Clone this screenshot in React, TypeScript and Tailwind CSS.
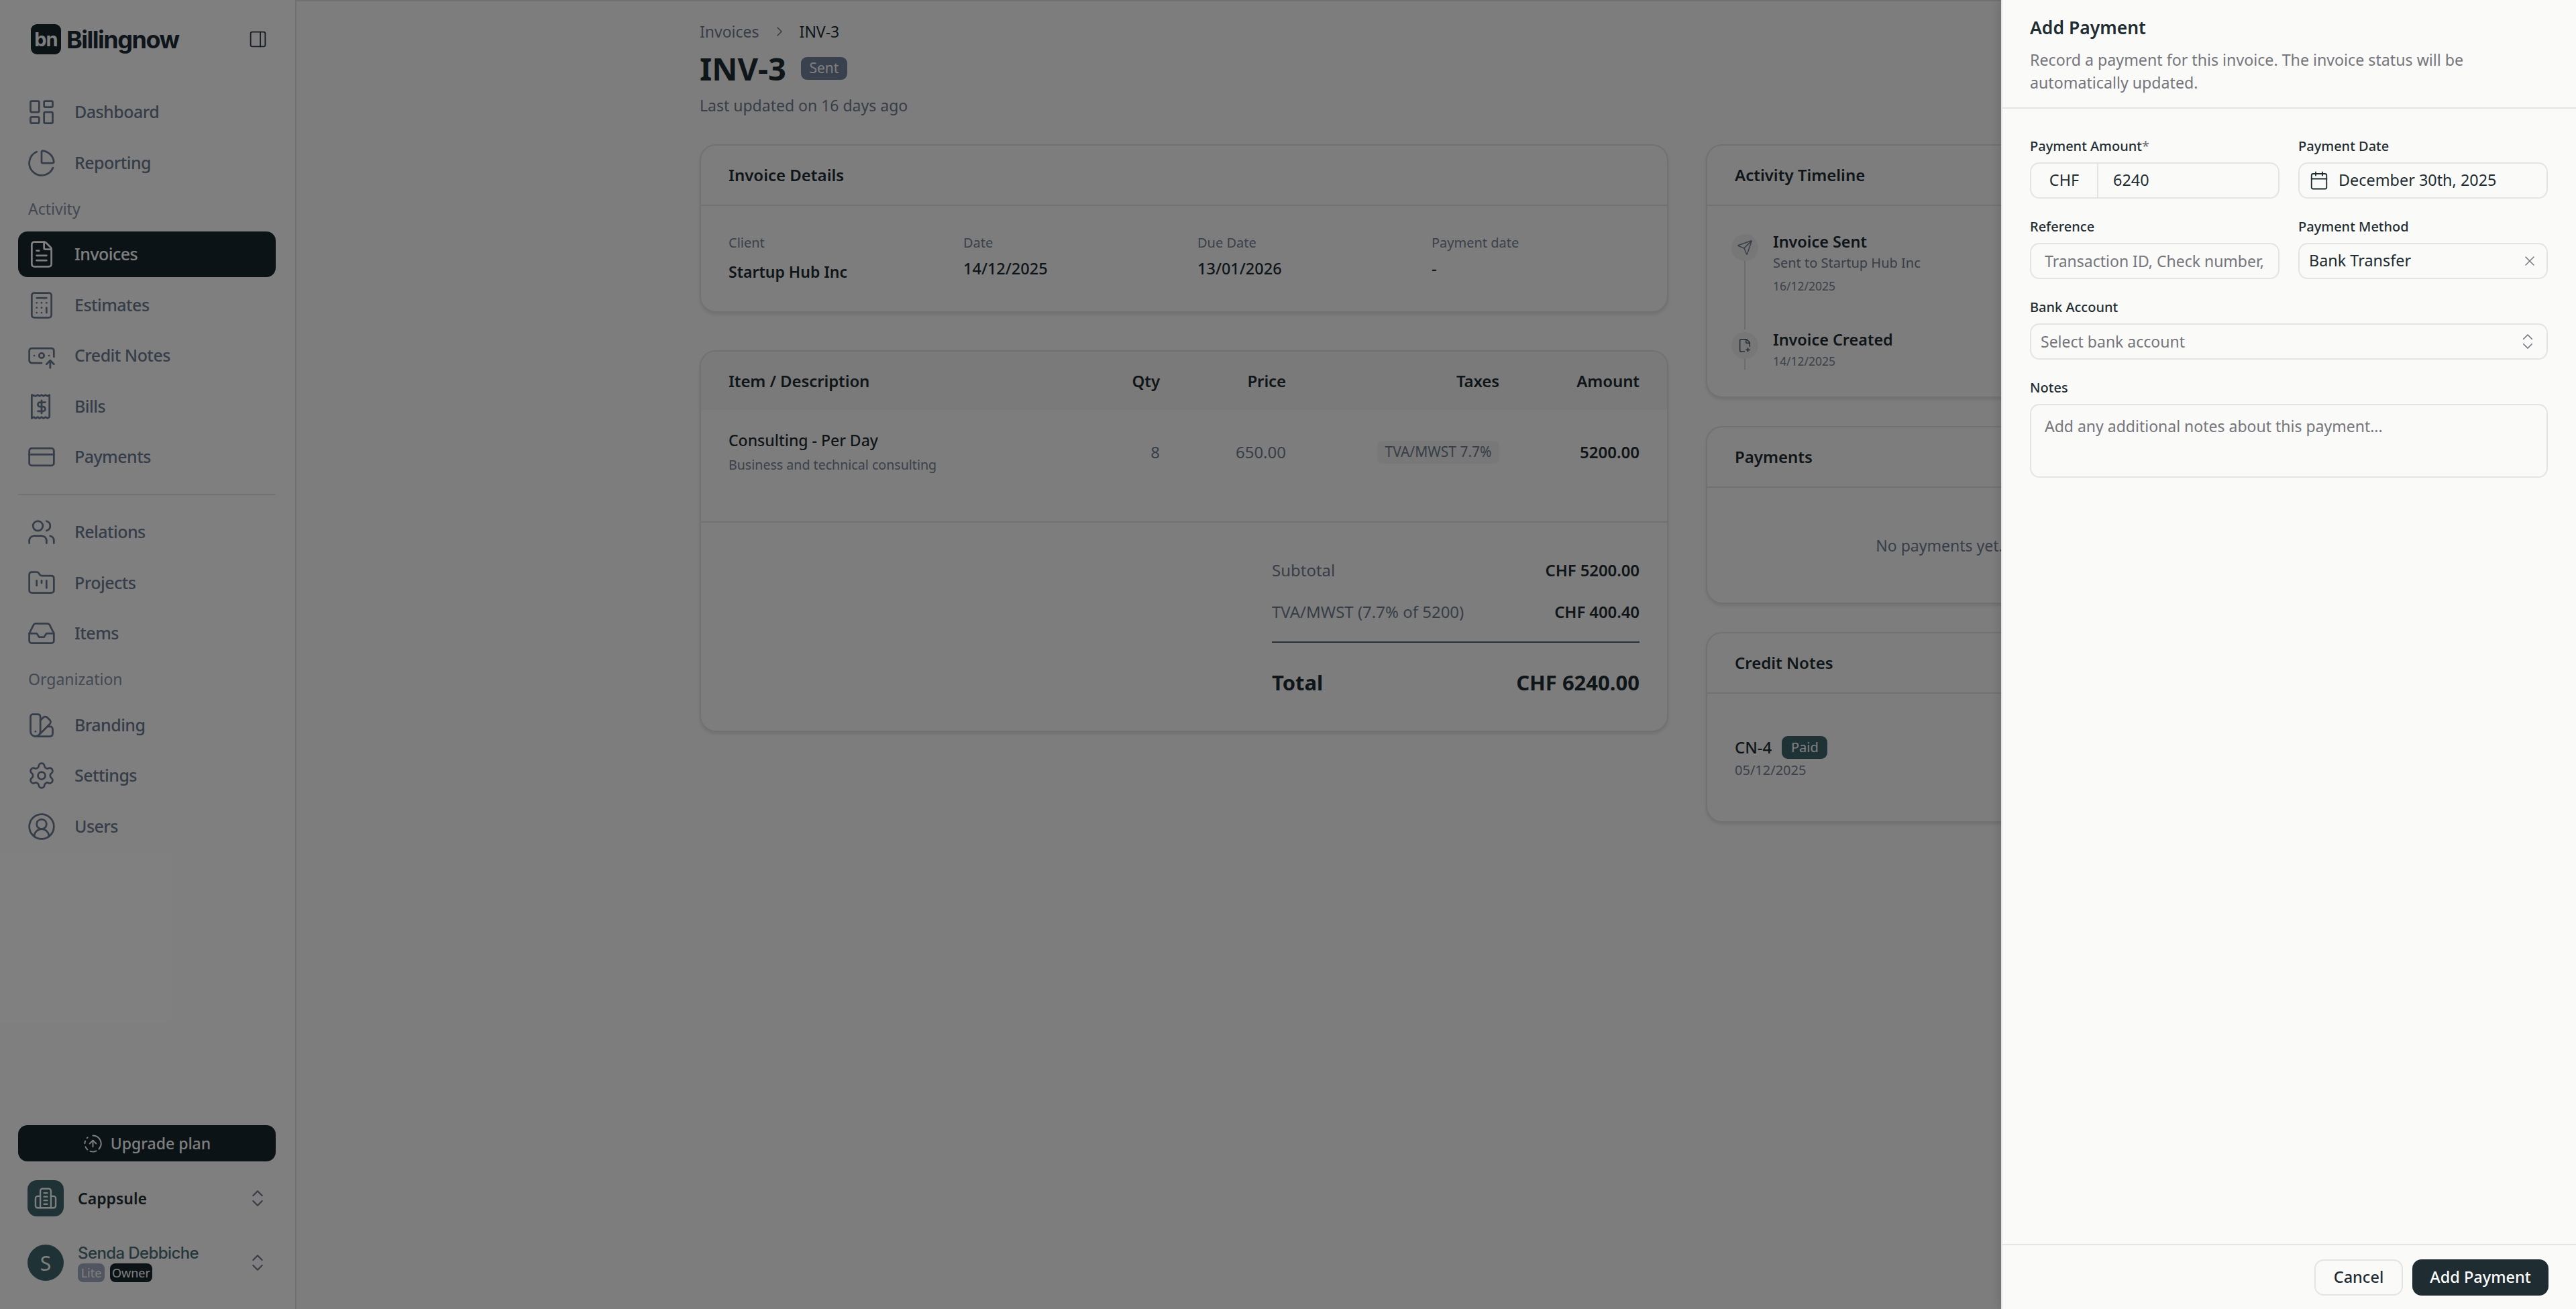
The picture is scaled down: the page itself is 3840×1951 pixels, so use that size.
import type { ReactNode } from 'react';
import {
  BanknoteArrowUp,
  Calculator,
  Calendar,
  ChartPie,
  ChevronRight,
  ChevronsUpDown,
  CircleFadingArrowUp,
  CircleUserRound,
  CreditCard,
  FilePlus2,
  FileText,
  FolderKanban,
  Inbox,
  LayoutDashboard,
  PanelRight,
  Send,
  Settings,
  SwatchBook,
  Users,
  X,
} from 'lucide-react';

function BillIcon({ size, strokeWidth }: { size: number; strokeWidth: number }) {
  return (
    <svg width={size} height={size} viewBox="0 0 24 24" fill="none" stroke="currentColor" strokeWidth={strokeWidth} strokeLinecap="round" strokeLinejoin="round">
      <path d="M4 2.5v19l1.6-1 1.6 1 1.6-1 1.6 1 1.6-1 1.6 1 1.6-1 1.6 1 1.6-1V2.5l-1.6 1-1.6-1-1.6 1-1.6-1-1.6 1-1.6-1-1.6 1z" />
      <path d="M15 8.5h-4.2a1.8 1.8 0 0 0 0 3.6h2.4a1.8 1.8 0 0 1 0 3.6H9" />
      <path d="M12 7v10.5" />
    </svg>
  );
}

function CompanyIcon() {
  return (
    <svg width={38} height={38} viewBox="0 0 24 24" fill="none" stroke="currentColor" strokeWidth={1.5} strokeLinecap="round" strokeLinejoin="round">
      <path d="M7 21V5a2 2 0 0 1 2-2h6a2 2 0 0 1 2 2v16" />
      <path d="M7 10H4.5a2 2 0 0 0-2 2v7a2 2 0 0 0 2 2h15a2 2 0 0 0 2-2v-7a2 2 0 0 0-2-2H17" />
      <path d="M10.5 7h3M10.5 10.5h3M10.5 14h3M10.5 17.5h3" />
    </svg>
  );
}

function NavItem({ icon, label, active }: { icon: ReactNode; label: string; active?: boolean }) {
  return (
    <div className={`flex h-[68px] items-center gap-[27px] rounded-[14px] pl-[13px] text-[25px] font-medium tracking-[-0.55px] ${active ? 'bg-[#17262f] text-white' : 'text-[#6b7b92]'}`}>
      {icon}
      <span>{label}</span>
    </div>
  );
}

function NavLabel({ children }: { children: string }) {
  return <div className="flex h-[68.5px] items-center pl-[15px] text-[23px] text-[#8391a6]">{children}</div>;
}

function Sidebar() {
  const ic = { size: 44, strokeWidth: 1.5 };
  return (
    <aside className="flex h-full w-[440px] shrink-0 flex-col bg-white pr-[29px] pl-[27px]">
      <div className="flex h-[133px] shrink-0 items-start justify-between pt-[36px] pr-[12px] pl-[19px]">
        <div className="flex h-[45px] items-center gap-[8px]">
          <div className="flex h-[45px] w-[45px] items-center justify-center rounded-[9px] bg-[#17262f] font-['Inter',sans-serif] text-[29px] leading-none font-bold tracking-[-1px] text-white">bn</div>
          <span className="font-['Inter',sans-serif] text-[36px] leading-none font-bold tracking-[-1.5px] text-[#1c2b36]">Billingnow</span>
        </div>
        <div className="flex h-[45px] items-center text-[#2d3b4a]"><PanelRight size={29} strokeWidth={1.5} /></div>
      </div>

      <div className="flex flex-col gap-[7.5px]">
        <NavItem icon={<LayoutDashboard {...ic} />} label="Dashboard" />
        <NavItem icon={<ChartPie {...ic} />} label="Reporting" />
      </div>
      <NavLabel>Activity</NavLabel>
      <div className="flex flex-col gap-[7.5px]">
        <NavItem active icon={<FileText {...ic} />} label="Invoices" />
        <NavItem icon={<Calculator {...ic} />} label="Estimates" />
        <NavItem icon={<BanknoteArrowUp {...ic} />} label="Credit Notes" />
        <NavItem icon={<BillIcon {...ic} />} label="Bills" />
        <NavItem icon={<CreditCard {...ic} />} label="Payments" />
      </div>
      <div className="my-[21px] h-[2px] shrink-0 bg-[#e4e4e7]" />
      <div className="flex flex-col gap-[7.5px]">
        <NavItem icon={<Users {...ic} />} label="Relations" />
        <NavItem icon={<FolderKanban {...ic} />} label="Projects" />
        <NavItem icon={<Inbox {...ic} />} label="Items" />
      </div>
      <NavLabel>Organization</NavLabel>
      <div className="flex flex-col gap-[7.5px]">
        <NavItem icon={<SwatchBook {...ic} />} label="Branding" />
        <NavItem icon={<Settings {...ic} />} label="Settings" />
        <NavItem icon={<CircleUserRound {...ic} />} label="Users" />
      </div>

      <div className="mt-auto pb-[42px]">
        <div className="flex h-[54px] items-center justify-center gap-[12px] rounded-[14px] bg-[#17262f] text-[23px] font-medium text-white">
          <CircleFadingArrowUp size={29} strokeWidth={1.6} />
          <span>Upgrade plan</span>
        </div>
        <div className="mt-[28px] flex h-[54px] items-center pl-[14px]">
          <div className="flex h-[54px] w-[54px] items-center justify-center rounded-[14px] bg-[#3e666f] text-white"><CompanyIcon /></div>
          <span className="ml-[21px] text-[23px] font-semibold text-[#1e2d33]">Cappsule</span>
          <div className="mr-[11px] ml-auto text-[#6b7b92]"><ChevronsUpDown size={32} strokeWidth={1.6} /></div>
        </div>
        <div className="mt-[42px] flex h-[54px] items-center pl-[14px]">
          <div className="flex h-[54px] w-[54px] items-center justify-center rounded-full bg-[#3e666f] text-[30px] text-white">S</div>
          <div className="ml-[21px] flex flex-col">
            <span className="font-['Inter',sans-serif] text-[24px] leading-[30px] font-medium tracking-[-0.6px] text-[#4d6f78]">Senda Debbiche</span>
            <div className="flex gap-[8px]">
              <span className="flex h-[28px] w-[40px] items-center justify-center rounded-[8px] bg-[#a0aabe] text-[18px] text-white">Lite</span>
              <span className="flex h-[28px] w-[63px] items-center justify-center rounded-[8px] bg-[#17262f] text-[18px] text-white">Owner</span>
            </div>
          </div>
          <div className="mr-[11px] ml-auto text-[#6b7b92]"><ChevronsUpDown size={32} strokeWidth={1.6} /></div>
        </div>
      </div>
    </aside>
  );
}

function Card({ className, children }: { className: string; children: ReactNode }) {
  return <section className={`overflow-hidden rounded-[24px] border-2 border-[#e2e2e4] bg-[#fbfbfb] shadow-[0_3px_4px_rgba(0,0,0,0.09)] ${className}`}>{children}</section>;
}

function CardHead({ title }: { title: string }) {
  return <div className="flex h-[90px] items-center border-b-2 border-[#e2e2e4] pl-[41px] text-[24px] font-semibold text-[#1e2d33]">{title}</div>;
}

function DetailCol({ label, value, bold, className }: { label: string; value: string; bold?: boolean; className: string }) {
  return (
    <div className={className}>
      <div className="text-[20px] leading-[28px] text-[#748294]">{label}</div>
      <div className={`leading-[32px] text-[#1e2d33] ${bold ? 'mt-[13px] text-[23px] font-semibold' : 'mt-[8px] text-[23.5px] font-medium'}`}>{value}</div>
    </div>
  );
}

function TotalRow({ label, value }: { label: string; value: string }) {
  return (
    <div className="flex h-[62px] items-center justify-between text-[24px]">
      <span className="text-[#6f7d90]">{label}</span>
      <span className="font-semibold tracking-[-0.1px] text-[#1e2d33]">{value}</span>
    </div>
  );
}

function InvoicePage() {
  const cols = 'grid grid-cols-[563px_80px_188px_318px_209px] items-center px-[41px]';
  return (
    <main className="h-full min-w-0 flex-1 border-t-2 border-l-2 border-[#e2e2e4] bg-[#fafafa]">
      <div className="mx-auto w-[2196px]">
        <div className="mt-[28px] flex h-[34px] items-center text-[23px] text-[#6f7d90]">
          <span>Invoices</span>
          <ChevronRight size={24} strokeWidth={1.6} className="mx-[18px]" />
          <span className="text-[#1e2d33]">INV-3</span>
        </div>
        <div className="mt-[8px] flex h-[60px] items-center">
          <h1 className="text-[47px] font-bold text-[#1e2d33]">INV-3</h1>
          <span className="ml-[22px] flex h-[34px] w-[69px] items-center justify-center rounded-[9px] bg-[#74829c] text-[21px] text-white">Sent</span>
        </div>
        <p className="mt-[8px] h-[34px] text-[23px] leading-[34px] text-[#6f7d90]">Last updated on 16 days ago</p>

        <div className="mt-[41px] flex gap-[56px]">
          <div className="flex w-[1444px] shrink-0 flex-col gap-[56px]">
            <Card className="h-[251px]">
              <CardHead title="Invoice Details" />
              <div className="flex pt-[41px] pl-[41px]">
                <DetailCol className="w-[350px]" label="Client" value="Startup Hub Inc" bold />
                <DetailCol className="w-[349px]" label="Date" value="14/12/2025" />
                <DetailCol className="w-[349px]" label="Due Date" value="13/01/2026" />
                <DetailCol className="w-[300px]" label="Payment date" value="-" />
              </div>
            </Card>

            <Card className="h-[569px]">
              <div className={`${cols} h-[87px] bg-[#f5f5f5] text-[24px] font-semibold tracking-[-0.1px] text-[#1e2d33]`}>
                <span>Item / Description</span>
                <span className="text-right">Qty</span>
                <span className="text-right">Price</span>
                <span className="text-right">Taxes</span>
                <span className="text-right">Amount</span>
              </div>
              <div className={`${cols} h-[168px] border-b-2 border-[#e2e2e4] pb-[40px] text-[24px]`}>
                <div>
                  <div className="text-[23px] leading-[36px] font-medium text-[#1e2d33]">Consulting - Per Day</div>
                  <div className="mt-[2px] text-[19.6px] leading-[34px] text-[#748294]">Business and technical consulting</div>
                </div>
                <span className="text-right text-[#6f7d90]">8</span>
                <span className="text-right text-[#6f7d90]">650.00</span>
                <span className="flex justify-end">
                  <span className="flex h-[34px] w-[182px] items-center justify-center rounded-[8px] bg-[#f0f0f1] text-[21px] text-[#6f7d90]">TVA/MWST 7.7%</span>
                </span>
                <span className="text-right font-semibold text-[#1e2d33]">5200.00</span>
              </div>
              <div className="mr-[41px] ml-auto w-[548px] pt-[40px]">
                <TotalRow label="Subtotal" value="CHF 5200.00" />
                <TotalRow label="TVA/MWST (7.7% of 5200)" value="CHF 400.40" />
                <div className="mt-[13px] h-[2px] bg-[#4e6670]" />
                <div className="flex h-[118px] items-center justify-between text-[31px] font-bold text-[#1e2d33]">
                  <span>Total</span>
                  <span>CHF 6240.00</span>
                </div>
              </div>
            </Card>
          </div>

          <div className="flex w-[696px] shrink-0 flex-col gap-[42px]">
            <Card className="h-[378px]">
              <CardHead title="Activity Timeline" />
              <div className="pt-[38px] pl-[36px]">
                <div className="flex h-[146px] gap-[22px]">
                  <div className="flex w-[40px] flex-col items-center pt-[4px]">
                    <div className="flex h-[40px] w-[40px] shrink-0 items-center justify-center rounded-full bg-[#eeeeef] text-[#6f7d90]"><Send size={24} strokeWidth={1.5} /></div>
                    <div className="w-[2px] flex-1 bg-[#d8d8da]" />
                  </div>
                  <div>
                    <div className="text-[23.4px] leading-[30px] font-semibold text-[#1e2d33]">Invoice Sent</div>
                    <div className="mt-[2px] text-[20px] leading-[30px] text-[#6f7d90]">Sent to Startup Hub Inc</div>
                    <div className="mt-[4px] text-[17.5px] leading-[30px] text-[#748294]">16/12/2025</div>
                  </div>
                </div>
                <div className="flex h-[60px] gap-[22px]">
                  <div className="flex w-[40px] flex-col items-center pt-[4px]">
                    <div className="flex h-[40px] w-[40px] shrink-0 items-center justify-center rounded-full bg-[#eeeeef] text-[#3e5560]"><FilePlus2 size={22} strokeWidth={1.6} /></div>
                    <div className="w-[2px] flex-1 bg-[#d8d8da]" />
                  </div>
                  <div>
                    <div className="text-[23.4px] leading-[30px] font-semibold text-[#1e2d33]">Invoice Created</div>
                    <div className="mt-[2px] text-[17.5px] leading-[30px] text-[#748294]">14/12/2025</div>
                  </div>
                </div>
              </div>
            </Card>

            <Card className="h-[265px]">
              <CardHead title="Payments" />
              <div className="flex h-[173px] items-center justify-center text-[23px] text-[#6f7d90]">No payments yet.</div>
            </Card>

            <Card className="h-[284px]">
              <CardHead title="Credit Notes" />
              <div className="pt-[63px] pl-[41px]">
                <div className="flex h-[34px] items-center gap-[15px]">
                  <span className="text-[24px] font-medium text-[#1e2d33]">CN-4</span>
                  <span className="flex h-[34px] w-[68px] items-center justify-center rounded-[9px] bg-[#3e666f] text-[20px] text-white">Paid</span>
                </div>
                <div className="mt-[2px] text-[20px] leading-[30px] text-[#748294]">05/12/2025</div>
              </div>
            </Card>
          </div>
        </div>
      </div>
    </main>
  );
}

function FieldLabel({ children }: { children: ReactNode }) {
  return <div className="mb-[10px] h-[28px] text-[20px] leading-[28px] font-medium text-[#1f2d33]">{children}</div>;
}

const box = 'flex h-[54px] items-center rounded-[14px] border-2 border-[#e4e4e7] text-[23.4px] text-[#1f2d33]';

function PaymentSheet() {
  return (
    <aside className="absolute inset-y-0 right-0 flex w-[857px] flex-col border-l-2 border-[#e4e4e7] bg-[#fafaf9] shadow-[-4px_0_12px_rgba(0,0,0,0.1)]">
      <header className="h-[162px] shrink-0 border-b-2 border-[#e4e4e7] pt-[22px] pl-[41px]">
        <h2 className="text-[26.5px] leading-[38px] font-semibold text-[#1f2d33]">Add Payment</h2>
        <p className="mt-[12px] w-[700px] text-[23.2px] leading-[34px] text-[#75757c]">Record a payment for this invoice. The invoice status will be automatically updated.</p>
      </header>

      <form className="grid grid-cols-[372px_372px] gap-x-[28px] pt-[42px] pl-[41px]">
        <div className="h-[120px]">
          <FieldLabel>Payment Amount<span className="text-[#75757c]">*</span></FieldLabel>
          <div className={box}>
            <span className="flex h-full w-[100px] shrink-0 items-center justify-center border-r-2 border-[#e4e4e7]">CHF</span>
            <span className="pl-[22px]">6240</span>
          </div>
        </div>
        <div>
          <FieldLabel>Payment Date</FieldLabel>
          <div className={`${box} gap-[14px] pl-[14px]`}>
            <Calendar size={30} strokeWidth={1.5} />
            <span>December 30th, 2025</span>
          </div>
        </div>
        <div className="h-[120px]">
          <FieldLabel>Reference</FieldLabel>
          <input readOnly placeholder="Transaction ID, Check number, etc." className={`${box} w-full px-[20px] text-[23px] outline-none placeholder:text-[#75757c]`} />
        </div>
        <div>
          <FieldLabel>Payment Method</FieldLabel>
          <div className={`${box} justify-between pr-[13px] pl-[14px]`}>
            <span>Bank Transfer</span>
            <X size={24} strokeWidth={1.5} className="text-[#75757c]" />
          </div>
        </div>
        <div className="col-span-2 h-[120px]">
          <FieldLabel>Bank Account</FieldLabel>
          <div className={`${box} justify-between pr-[13px] pl-[14px] text-[23px] text-[#75757c]`}>
            <span>Select bank account</span>
            <ChevronsUpDown size={30} strokeWidth={1.4} />
          </div>
        </div>
        <div className="col-span-2">
          <FieldLabel>Notes</FieldLabel>
          <textarea readOnly placeholder="Add any additional notes about this payment..." className="block h-[110px] w-full resize-none rounded-[14px] border-2 border-[#e4e4e7] px-[20px] py-[14px] text-[23px] leading-[34px] outline-none placeholder:text-[#75757c]" />
        </div>
      </form>

      <footer className="mt-auto flex h-[97px] items-start justify-end gap-[14px] border-t-2 border-[#e4e4e7] pt-[21px] pr-[41px] text-[23.5px] font-medium">
        <button type="button" className="h-[54px] w-[132px] rounded-[14px] border-2 border-[#e4e4e7] text-[#1f2d33]">Cancel</button>
        <button type="button" className="h-[54px] w-[203px] rounded-[14px] bg-[#1f2d33] text-white">Add Payment</button>
      </footer>
    </aside>
  );
}

export default function App() {
  return (
    <div className="relative flex h-[1951px] w-[3840px] overflow-hidden bg-[#fafafa] font-['Noto_Sans',sans-serif]">
      <Sidebar />
      <InvoicePage />
      <div className="absolute inset-0 bg-black/50" />
      <PaymentSheet />
    </div>
  );
}
